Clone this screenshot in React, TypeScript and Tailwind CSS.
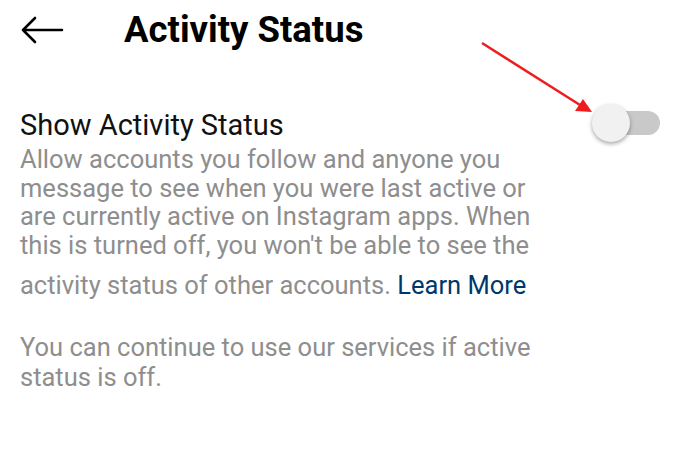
import React from "react";

const BackArrow = () => (
  <svg width="44" height="28" viewBox="0 0 44 28" fill="none">
    <path
      d="M42 14H3M15 2L3 14l12 12"
      stroke="#000"
      strokeWidth="2.6"
      strokeLinecap="round"
      strokeLinejoin="round"
    />
  </svg>
);

const Toggle = () => (
  <div className="relative w-[68px] h-[40px] shrink-0">
    <div className="absolute left-[8px] right-0 top-[8px] h-[24px] rounded-full bg-[#c9c9c9]" />
    <div className="absolute left-0 top-[1px] w-[38px] h-[38px] rounded-full bg-[#f1f1f1] shadow-[0_2px_4px_rgba(0,0,0,0.35)]" />
  </div>
);

export default function App() {
  return (
    <div className="relative w-[682px] h-[476px] bg-white overflow-hidden font-['Roboto',sans-serif]">
      <div className="flex items-center h-[60px] pl-[20px]">
        <BackArrow />
        <h1 className="ml-[60px] text-[36.5px] font-bold text-black">Activity Status</h1>
      </div>

      <div className="flex items-start justify-between pl-[20px] pr-[22px] mt-[48px]">
        <div className="w-[520px]">
          <p className="text-[29px] leading-[34px] text-[#111]">Show Activity Status</p>
          <p className="mt-[3px] text-[25.5px] leading-[28.5px] text-[#8e8e8e]">
            Allow accounts you follow and anyone you message to see when you were last
            active or are currently active on Instagram apps. When this is turned off, you
            won't be able to see the activity status of other accounts.{" "}
            {/* strut: the line with the link sits a little lower */}
            <span className="inline-block w-0 h-[35px] align-baseline" />
            <span className="text-[#00376b]">Learn More</span>
          </p>
          <p className="mt-[32px] text-[25.5px] leading-[30px] text-[#8e8e8e]">
            You can continue to use our services if active status is off.
          </p>
        </div>
        <div className="-mt-[5px]">
          <Toggle />
        </div>
      </div>

      <svg
        className="absolute left-0 top-0 pointer-events-none"
        width="682"
        height="476"
        viewBox="0 0 682 476"
      >
        <line x1="482" y1="43" x2="580" y2="105" stroke="#ee1c1c" strokeWidth="2.5" />
        <polygon points="592,112 575,111 583,99" fill="#ee1c1c" />
      </svg>
    </div>
  );
}
